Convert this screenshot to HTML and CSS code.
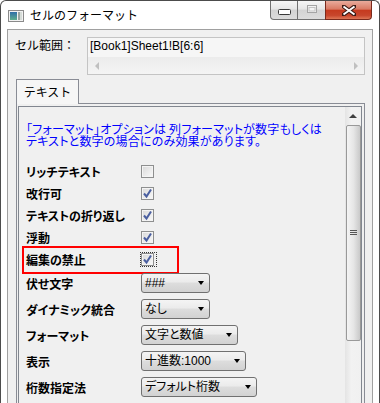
FILE: index.html
```html
<!DOCTYPE html>
<html lang="ja">
<head>
  <meta charset="UTF-8">
  <title>セルのフォーマット</title>
  <link rel="stylesheet" href="styles.css">
</head>
<body>

<div class="window">
  <div class="titlebar">
    <svg class="app-icon" width="16" height="12" viewBox="0 0 16 12">
      <defs>
        <linearGradient id="ig" x1="0" y1="0" x2="0" y2="1">
          <stop offset="0" stop-color="#2f6fa8"/>
          <stop offset="1" stop-color="#5fae8c"/>
        </linearGradient>
      </defs>
      <rect x="0.5" y="0.5" width="15" height="11" fill="#f2f2f2" stroke="#8a8a8a"/>
      <rect x="2" y="2" width="7" height="8" fill="url(#ig)"/>
      <rect x="10" y="2" width="2" height="8" fill="#9aa6a0"/>
      <rect x="12" y="2" width="2" height="8" fill="#d6dcd8"/>
    </svg>
    <span class="title">セルのフォーマット</span>
    <div class="caption-buttons">
      <div class="cap-btn cap-min">
        <svg width="13" height="6" viewBox="0 0 13 6"><rect x="0.5" y="0.5" width="12" height="5" rx="1" fill="#fff" stroke="#3a3a3a"/></svg>
      </div>
      <div class="cap-btn cap-max">
        <svg width="10" height="8" viewBox="0 0 10 8"><rect x="0.5" y="0.5" width="9" height="7" fill="#f4f4f4" stroke="#a4a4a4"/><rect x="2" y="2.5" width="6" height="3.5" fill="none" stroke="#c4c4c4"/></svg>
      </div>
      <div class="cap-btn cap-close">
        <svg width="14" height="11" viewBox="0 0 14 11"><path d="M1 1 L13 10 M13 1 L1 10" stroke="#3b1a14" stroke-width="4" stroke-linecap="square"/><path d="M1.5 1.5 L12.5 9.5 M12.5 1.5 L1.5 9.5" stroke="#fff" stroke-width="2"/></svg>
      </div>
    </div>
  </div>

  <div class="client">
    <div class="range-row">
      <span class="range-label">セル範囲：</span>
      <div class="range-box">
        <div class="range-text">[Book1]Sheet1!B[6:6]</div>
        <div class="hscroll">
          <span class="hs-btn"><span class="tri-left"></span></span>
          <span class="hs-btn"><span class="tri-right"></span></span>
        </div>
      </div>
    </div>

    <div class="tabs">
      <div class="tab">テキスト</div>
    </div>

    <div class="tab-panel">
      <div class="scroll-box">
        <div class="scroll-content">
          <p class="note">「フォーマット」オプションは 列フォーマットが数字もしくは<br>テキストと数字の場合にのみ効果があります。</p>

          <div class="prop-list">
            <div class="prop-row">
              <span class="prop-label">リッチテキスト</span>
              <span class="checkbox"></span>
            </div>
            <div class="prop-row">
              <span class="prop-label">改行可</span>
              <span class="checkbox checked"><svg width="11" height="11" viewBox="0 0 11 11"><path d="M2 5.5 L4.5 8.5 L9 1.5" fill="none" stroke="#4a5fa0" stroke-width="2"/></svg></span>
            </div>
            <div class="prop-row">
              <span class="prop-label">テキストの折り返し</span>
              <span class="checkbox checked"><svg width="11" height="11" viewBox="0 0 11 11"><path d="M2 5.5 L4.5 8.5 L9 1.5" fill="none" stroke="#4a5fa0" stroke-width="2"/></svg></span>
            </div>
            <div class="prop-row">
              <span class="prop-label">浮動</span>
              <span class="checkbox checked"><svg width="11" height="11" viewBox="0 0 11 11"><path d="M2 5.5 L4.5 8.5 L9 1.5" fill="none" stroke="#4a5fa0" stroke-width="2"/></svg></span>
            </div>
            <div class="prop-row highlight">
              <span class="prop-label">編集の禁止</span>
              <span class="focus-ring"><span class="checkbox checked"><svg width="11" height="11" viewBox="0 0 11 11"><path d="M2 5.5 L4.5 8.5 L9 1.5" fill="none" stroke="#4a5fa0" stroke-width="2"/></svg></span></span>
            </div>

            <div class="prop-row combo-row">
              <span class="prop-label">伏せ文字</span>
              <span class="combo combo-mask">###</span>
            </div>
            <div class="prop-row combo-row">
              <span class="prop-label">ダイナミック統合</span>
              <span class="combo combo-merge">なし</span>
            </div>
            <div class="prop-row combo-row">
              <span class="prop-label">フォーマット</span>
              <span class="combo combo-format">文字と数値</span>
            </div>
            <div class="prop-row combo-row">
              <span class="prop-label">表示</span>
              <span class="combo combo-display">十進数:1000</span>
            </div>
            <div class="prop-row combo-row">
              <span class="prop-label">桁数指定法</span>
              <span class="combo combo-digits">デフォルト桁数</span>
            </div>
          </div>
        </div>

        <div class="vscroll">
          <div class="vs-up"><span class="tri-up"></span></div>
          <div class="vs-thumb">
            <span class="grip"></span>
          </div>
        </div>
      </div>
    </div>
  </div>
</div>

</body>
</html>
```

FILE: styles.css
```css
* { margin: 0; padding: 0; box-sizing: border-box; }
html, body { overflow: hidden; }
body {
  font-family: "Noto Sans CJK JP", sans-serif;
  font-size: 12px;
  color: #000;
  background: #fff;
}
.window {
  width: 380px;
  height: 440px;
  border: 1px solid #4c4c4c;
  border-bottom: 0;
  border-radius: 6px 6px 0 0;
  background: #fff;
  padding: 0 6px;
  display: flex;
  flex-direction: column;
}

/* title bar */
.titlebar {
  height: 28px;
  display: flex;
  align-items: flex-start;
}
.app-icon {
  margin: 9px 0 0 1px;
}
.title {
  margin: 5px 0 0 6px;
  line-height: 18px;
}
.caption-buttons {
  margin-left: auto;
  margin-right: 1px;
  display: flex;
}
.cap-btn {
  height: 19px;
  border: 1px solid #707070;
  border-top: 0;
  display: flex;
  align-items: center;
  justify-content: center;
  background: linear-gradient(#f6f6f6 0%, #e6e6e6 45%, #d3d3d3 50%, #dcdcdc 100%);
}
.cap-min {
  width: 28px;
  border-bottom-left-radius: 4px;
  padding-top: 4px;
}
.cap-max {
  width: 29px;
  margin-left: -1px;
  padding-bottom: 2px;
}
.cap-close {
  width: 47px;
  margin-left: -1px;
  border-color: #7a2a1c;
  border-bottom-right-radius: 4px;
  background: linear-gradient(#e9ab9c 0%, #d97a64 45%, #c63a1f 52%, #c8462c 80%, #de7656 100%);
}

/* client area */
.client {
  flex: 1;
  border: 1px solid #a0a0a0;
  border-bottom: 0;
  background: #f0f0f0;
  padding: 7px 7px 0 8px;
  display: flex;
  flex-direction: column;
}
.range-row {
  display: flex;
  height: 38px;
}
.range-label {
  width: 72px;
  margin-left: -1px;
  line-height: 16px;
}
.range-box {
  flex: 1;
  border: 1px solid #c4c4c4;
  background: #f6f6f6;
  display: flex;
  flex-direction: column;
}
.range-text {
  height: 19px;
  line-height: 17px;
  padding-left: 2px;
  font-family: "Liberation Sans", "Noto Sans CJK JP", sans-serif;
}
.hscroll {
  height: 17px;
  display: flex;
  justify-content: space-between;
  background: linear-gradient(#ececec, #f4f4f4);
}
.hs-btn {
  width: 17px;
  height: 17px;
  display: flex;
  align-items: center;
  justify-content: center;
}
.tri-left {
  border-top: 4px solid transparent;
  border-bottom: 4px solid transparent;
  border-right: 4px solid #c0c0c0;
}
.tri-right {
  border-top: 4px solid transparent;
  border-bottom: 4px solid transparent;
  border-left: 4px solid #c0c0c0;
}

/* tab */
.tabs {
  margin-top: 4px;
  height: 25px;
  margin-bottom: -1px;
  display: flex;
  position: relative;
  z-index: 1;
}
.tab {
  width: 63px;
  border: 1px solid #898c95;
  border-bottom: 0;
  background: #f6f6f6;
  text-align: center;
  line-height: 24px;
}
.tab-panel {
  flex: 1;
  border: 1px solid #898c95;
  border-bottom: 0;
  padding: 2px 2px 0 1px;
  display: flex;
}
.scroll-box {
  flex: 1;
  border: 1px solid #828790;
  border-bottom: 0;
  display: flex;
}
.scroll-content {
  flex: 1;
  padding: 16px 0 0 7px;
}
.note {
  color: #0000ff;
  line-height: 12px;
  letter-spacing: 0.2px;
  font-feature-settings: "palt";
}

/* property rows */
.prop-list {
  margin-top: 13px;
}
.prop-row {
  display: flex;
  align-items: center;
  height: 22px;
  position: relative;
}
.prop-row.combo-row {
  height: 26px;
}
.prop-label {
  width: 115px;
  font-weight: bold;
  font-feature-settings: "palt";
}
.checkbox {
  width: 13px;
  height: 13px;
  border: 1px solid #8e8f8f;
  box-shadow: inset 0 0 0 1px #f4f4f4;
  background: linear-gradient(135deg, #d9d9d9, #fafafa);
  display: flex;
  align-items: center;
  justify-content: center;
}
.focus-ring {
  display: flex;
  margin-left: -1px;
  padding: 0 2px 0 0;
  border: 1px dotted #333;
}
.highlight::after {
  content: "";
  position: absolute;
  left: -4px;
  top: -2px;
  width: 153px;
  height: 24px;
  border: 2px solid #ff0000;
}
.combo {
  height: 20px;
  border: 1px solid #707070;
  border-radius: 3px;
  background: linear-gradient(#f4f4f4 0%, #ebebeb 45%, #dddddd 50%, #d2d2d2 100%);
  padding: 0 5px 0 3px;
  line-height: 18px;
  display: flex;
  align-items: center;
  justify-content: space-between;
  font-family: "Liberation Sans", "Noto Sans CJK JP", sans-serif;
  font-feature-settings: "palt";
}
.combo::after {
  content: "";
  border-left: 3.5px solid transparent;
  border-right: 3.5px solid transparent;
  border-top: 4px solid #000;
}
.combo-mask { width: 69px; }
.combo-merge { width: 69px; }
.combo-format { width: 97px; }
.combo-display { width: 105px; }
.combo-digits { width: 116px; }

/* vertical scrollbar */
.vscroll {
  width: 16px;
  background: linear-gradient(90deg, #e4e4e4, #f2f2f2 40%, #f0f0f0);
  display: flex;
  flex-direction: column;
}
.vs-up {
  height: 18px;
  display: flex;
  align-items: center;
  justify-content: center;
}
.tri-up {
  border-left: 4px solid transparent;
  border-right: 4px solid transparent;
  border-bottom: 4px solid #404040;
}
.vs-thumb {
  height: 216px;
  margin: 0 0 0 1px;
  border: 1px solid #999;
  border-radius: 2px;
  background: linear-gradient(90deg, #f4f4f4, #e6e6e6 50%, #c9c9c9);
  display: flex;
  align-items: center;
  justify-content: center;
}
.grip {
  width: 7px;
  height: 6px;
  background: repeating-linear-gradient(#555 0 1px, transparent 1px 2px);
}
```
